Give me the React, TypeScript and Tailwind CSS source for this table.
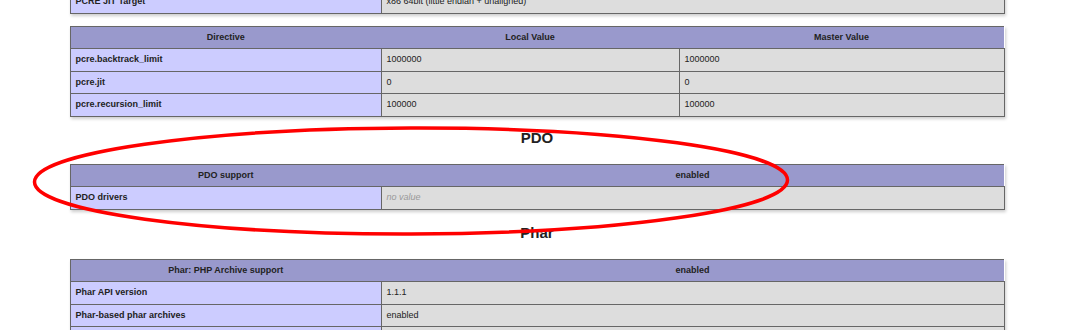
import React from "react";

type Row = { name: string; values: (string | null)[] };

const text = "px-[5px] py-1 leading-[13.5px] text-[9px] align-middle";
const cell = `${text} border border-[#666]`;
const head = `${text} border-t border-[#666] bg-[#99c] font-bold text-center first:border-l`;
const entry = `${cell} bg-[#ccf] font-bold text-left`;
const value = `${cell} bg-[#ddd] text-left`;

function InfoTable({
  cols,
  header,
  rows,
  className = "",
}: {
  cols: number[];
  header?: string[];
  rows: Row[];
  className?: string;
}) {
  return (
    <table
      className={`mx-auto w-[934px] table-fixed border-collapse shadow-[1px_2px_3px_rgba(0,0,0,0.2)] ${className}`}
    >
      <colgroup>
        {cols.map((w, i) => (
          <col key={i} style={{ width: w }} />
        ))}
      </colgroup>
      <tbody>
        {header && (
          <tr>
            {header.map((h, i) => (
              <th key={i} className={head}>
                {h}
              </th>
            ))}
          </tr>
        )}
        {rows.map((r) => (
          <tr key={r.name}>
            <td className={entry}>{r.name}</td>
            {r.values.map((v, i) => (
              <td key={i} className={value}>
                {v === null ? <i className="text-[#999]">no value</i> : v}
              </td>
            ))}
          </tr>
        ))}
      </tbody>
    </table>
  );
}

export default function App() {
  return (
    <div className="relative w-[1084px] h-[330px] overflow-hidden bg-white text-[#222] font-['Liberation_Sans',Arial,sans-serif]">
      <div className="w-[1074px]">
        <InfoTable
          className="mt-[-10px]"
          cols={[311, 623]}
          rows={[{ name: "PCRE JIT Target", values: ["x86 64bit (little endian + unaligned)"] }]}
        />

        <InfoTable
          className="mt-[12px]"
          cols={[311, 298, 325]}
          header={["Directive", "Local Value", "Master Value"]}
          rows={[
            { name: "pcre.backtrack_limit", values: ["1000000", "1000000"] },
            { name: "pcre.jit", values: ["0", "0"] },
            { name: "pcre.recursion_limit", values: ["100000", "100000"] },
          ]}
        />

        <h2 className="mt-[12px] h-[17px] text-center text-[15px] leading-[17px] font-bold">PDO</h2>

        <InfoTable
          className="mt-[18px]"
          cols={[311, 623]}
          header={["PDO support", "enabled"]}
          rows={[{ name: "PDO drivers", values: [null] }]}
        />

        <h2 className="mt-[14px] h-[17px] text-center text-[15px] leading-[17px] font-bold">Phar</h2>

        <InfoTable
          className="mt-[18px]"
          cols={[311, 623]}
          header={["Phar: PHP Archive support", "enabled"]}
          rows={[
            { name: "Phar API version", values: ["1.1.1"] },
            { name: "Phar-based phar archives", values: ["enabled"] },
            { name: "Tar-based phar archives", values: ["enabled"] },
          ]}
        />
      </div>

      {/* red annotation circled over the PDO block */}
      <svg className="pointer-events-none absolute left-0 top-0" width="1084" height="330" viewBox="0 0 1084 330">
        <ellipse
          cx="411"
          cy="181"
          rx="376.5"
          ry="53"
          fill="none"
          stroke="#ff0000"
          strokeWidth="3.5"
          transform="rotate(-0.15 411 181)"
        />
      </svg>
    </div>
  );
}
